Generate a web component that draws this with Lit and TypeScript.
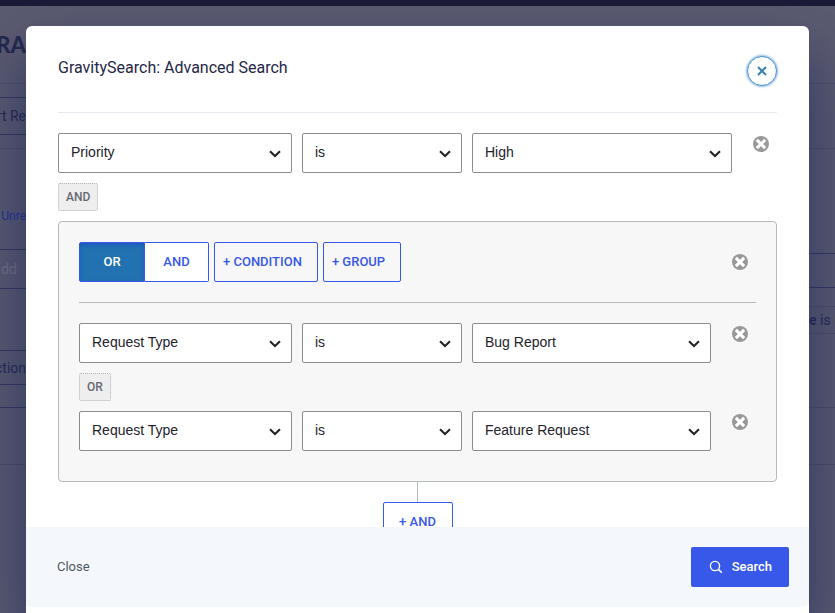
import { LitElement, html, css } from "lit";
import { customElement, property } from "lit/decorators.js";

const removeIcon = html`<svg viewBox="0 0 16 16" width="16" height="16" aria-hidden="true">
  <circle cx="8" cy="8" r="8" fill="#999"></circle>
  <path d="M4.9 4.9l6.2 6.2M11.1 4.9l-6.2 6.2" stroke="currentColor" stroke-width="3" stroke-linecap="square"></path>
</svg>`;

@customElement("condition-row")
class ConditionRow extends LitElement {
  @property() field = "";
  @property() value = "";

  static styles = css`
    :host { display: flex; align-items: flex-start; }
    .fields { flex: 1; display: flex; gap: 10px; }
    .pick { position: relative; display: block; }
    .field { flex: 1 1 234px; }
    .field.nested { flex-basis: 213px; }
    .operator { flex: 0 0 160px; }
    .value { flex: 1 1 260px; }
    .value.nested { flex-basis: 239px; }
    select {
      appearance: none;
      box-sizing: border-box;
      width: 100%;
      height: 40px;
      padding: 0 36px 2px 12px;
      border: 1px solid #8c8c8c;
      border-radius: 2px;
      background: #fff;
      color: #23232b;
      font: 14px "Liberation Sans", Arial, sans-serif;
    }
    .chevron { position: absolute; right: 11px; top: 17px; pointer-events: none; }
    .remove {
      display: flex;
      width: 16px;
      height: 16px;
      margin: 3px 8px 0 21px;
      padding: 0;
      border: 0;
      background: none;
      color: #fff;
    }
  `;

  private pick(kind: string, label: string, text: string) {
    const nested = this.hasAttribute("nested") ? "nested" : "";
    return html`<span class="pick ${kind} ${nested}">
      <select aria-label=${label}><option>${text}</option></select>
      <svg class="chevron" width="12" height="8" viewBox="0 0 12 8" fill="none" aria-hidden="true">
        <path d="M1 1.2l5 4.8 5-4.8" stroke="#222" stroke-width="2"></path>
      </svg>
    </span>`;
  }

  render() {
    return html`
      <div class="fields">
        ${this.pick("field", "Field", this.field)}
        ${this.pick("operator", "Operator", "is")}
        ${this.pick("value", "Value", this.value)}
      </div>
      <button class="remove" aria-label="Remove condition">${removeIcon}</button>
    `;
  }
}

@customElement("app-root")
class AppRoot extends LitElement {
  static styles = css`
    :host {
      display: block;
      position: relative;
      height: 100vh;
      overflow: hidden;
      background: #5b5b70;
      font-family: Roboto, sans-serif;
    }
    button { font-family: inherit; margin: 0; }

    .page { display: flex; flex-wrap: wrap; justify-content: space-between; color: #24284e; }
    .bar { flex: 0 0 100%; height: 6px; background: #1a1b35; }
    .edge { width: 26px; font-size: 14px; white-space: nowrap; }
    .edge div { box-sizing: border-box; border-bottom: 1px solid #34385c; display: flex; align-items: center; }
    .edge .faint { border-color: #4c4e69; }
    .left div { justify-content: flex-end; }
    .h14 { height: 14px; } .h19 { height: 19px; } .h23 { height: 23px; }
    .h27 { height: 27px; } .h34 { height: 34px; } .h37 { height: 37px; } .h39 { height: 39px; }
    .h57 { height: 57px; } .h62 { height: 62px; } .h65 { height: 65px; }
    .h74 { height: 74px; } .h78 { height: 78px; } .h101 { height: 101px; } .h105 { height: 105px; }
    .brand { font: 900 22px Lato, sans-serif; }
    .link { color: #232f9c; font-size: 12px; padding-top: 34px; }
    .edge .muted { color: #747688; padding-right: 9px; }

    .dialog {
      position: absolute;
      inset: 26px 26px 0;
      display: flex;
      flex-direction: column;
      box-sizing: border-box;
      padding-bottom: 6px;
      border-radius: 6px 6px 0 0;
      background: #fff;
      box-shadow: 0 30px 60px rgba(28, 40, 90, 0.75);
    }
    header {
      display: flex;
      justify-content: space-between;
      align-items: flex-start;
      box-sizing: border-box;
      height: 87px;
      margin: 0 32px;
      padding-top: 30px;
      border-bottom: 1px solid #e9e9f2;
    }
    h1 { margin: 0; font-size: 16px; line-height: 24px; font-weight: 400; color: #242748; }
    .close {
      display: flex;
      align-items: center;
      justify-content: center;
      width: 30px;
      height: 30px;
      padding: 0;
      border: 1px solid #4f94d4;
      border-radius: 50%;
      background: #fff;
      box-shadow: 0 0 2px 1px rgba(79, 148, 212, 0.6);
    }
    .body { flex: 1; min-height: 0; overflow: hidden; padding: 20px 32px 0; }
    .joiner {
      display: block;
      box-sizing: border-box;
      width: fit-content;
      height: 28px;
      margin: 10px 0;
      padding: 0 7px;
      border: 1px dotted #b0b5ba;
      border-radius: 2px;
      background: #eee;
      color: #646970;
      font-size: 12px;
      font-weight: 500;
      line-height: 26px;
    }
    .group { padding: 20px 20px 30px; border: 1px solid #b4b9be; border-radius: 4px; background: #f7f7f7; }
    .tools {
      display: flex;
      align-items: flex-start;
      gap: 5px;
      padding-bottom: 20px;
      margin-bottom: 20px;
      border-bottom: 1px solid #b4b9be;
    }
    .switch { display: flex; }
    .btn {
      box-sizing: border-box;
      height: 40px;
      padding: 0 15px 2px 8px;
      border: 1px solid #3858e9;
      border-radius: 2px;
      background: transparent;
      color: #3858e9;
      font-size: 13px;
      font-weight: 500;
    }
    .switch .btn { width: 66px; padding: 0 0 2px; }
    .switch .btn + .btn { width: 64px; border-left: 0; border-radius: 0 2px 2px 0; background: #fff; }
    .switch .on { border-radius: 2px 0 0 2px; background: #2271b1; color: #fff; box-shadow: inset 0 2px 5px -1px #1d4ec4; }
    .remove {
      display: flex;
      margin: 12px 8px 0 auto;
      padding: 0;
      border: 0;
      background: none;
      color: #fff;
    }
    .add { display: flex; flex-direction: column; align-items: center; }
    .add::before { content: ""; width: 1px; height: 20px; background: #b4b9be; }
    .add .btn { width: 70px; padding: 0 0 2px; background: #fff; }
    footer {
      display: flex;
      justify-content: space-between;
      align-items: center;
      flex: 0 0 80px;
      padding: 0 20px 0 31px;
      border-radius: 0 0 6px 6px;
      background: #f4f8fc;
    }
    .cancel { padding: 0 0 2px; border: 0; background: none; color: #50575e; font-size: 13px; }
    .search {
      display: flex;
      align-items: center;
      gap: 9px;
      height: 40px;
      padding: 0 17px 0 18px;
      border: 0;
      border-radius: 2px;
      background: #3858e9;
      color: #fff;
      font-size: 13px;
      font-weight: 500;
    }
    .search span { padding-bottom: 2px; }
  `;

  render() {
    return html`
      <div class="page" aria-hidden="true">
        <div class="bar"></div>
        <div class="edge left">
          <div class="h78 faint brand">RA</div>
          <div class="h14"></div>
          <div class="h37">rt Re</div>
          <div class="h14 faint"></div>
          <div class="h101 link">Unre</div>
          <div class="h39 muted">dd</div>
          <div class="h62"></div>
          <div class="h34">ction</div>
          <div class="h23"></div>
          <div class="h57 faint"></div>
        </div>
        <div class="edge">
          <div class="h78 faint"></div>
          <div class="h65 faint"></div>
          <div class="h105"></div>
          <div class="h34"></div>
          <div class="h19 faint"></div>
          <div class="h27 faint"><b>e</b>&nbsp;is&nbsp;<b>I</b></div>
          <div class="h74 faint"></div>
          <div class="h57 faint"></div>
        </div>
      </div>

      <section class="dialog" role="dialog" aria-label="Advanced Search">
        <header>
          <h1>GravitySearch: Advanced Search</h1>
          <button class="close" aria-label="Close dialog">
            <svg width="12" height="12" viewBox="0 0 12 12" aria-hidden="true">
              <path d="M2 2l8 8M10 2l-8 8" stroke="#3c7fae" stroke-width="2"></path>
            </svg>
          </button>
        </header>
        <div class="body">
          <condition-row field="Priority" value="High"></condition-row>
          <span class="joiner">AND</span>
          <div class="group">
            <div class="tools">
              <div class="switch">
                <button class="btn on">OR</button>
                <button class="btn">AND</button>
              </div>
              <button class="btn">+ CONDITION</button>
              <button class="btn">+ GROUP</button>
              <button class="remove" aria-label="Remove group">${removeIcon}</button>
            </div>
            <condition-row nested field="Request Type" value="Bug Report"></condition-row>
            <span class="joiner">OR</span>
            <condition-row nested field="Request Type" value="Feature Request"></condition-row>
          </div>
          <div class="add"><button class="btn">+ AND</button></div>
        </div>
        <footer>
          <button class="cancel">Close</button>
          <button class="search">
            <svg width="14" height="14" viewBox="0 0 14 14" fill="none" aria-hidden="true">
              <circle cx="6" cy="6" r="4.6" stroke="currentColor" stroke-width="1.4"></circle>
              <path d="M9.4 9.4l3.4 3.4" stroke="currentColor" stroke-width="1.6"></path>
            </svg>
            <span>Search</span>
          </button>
        </footer>
      </section>
    `;
  }
}
